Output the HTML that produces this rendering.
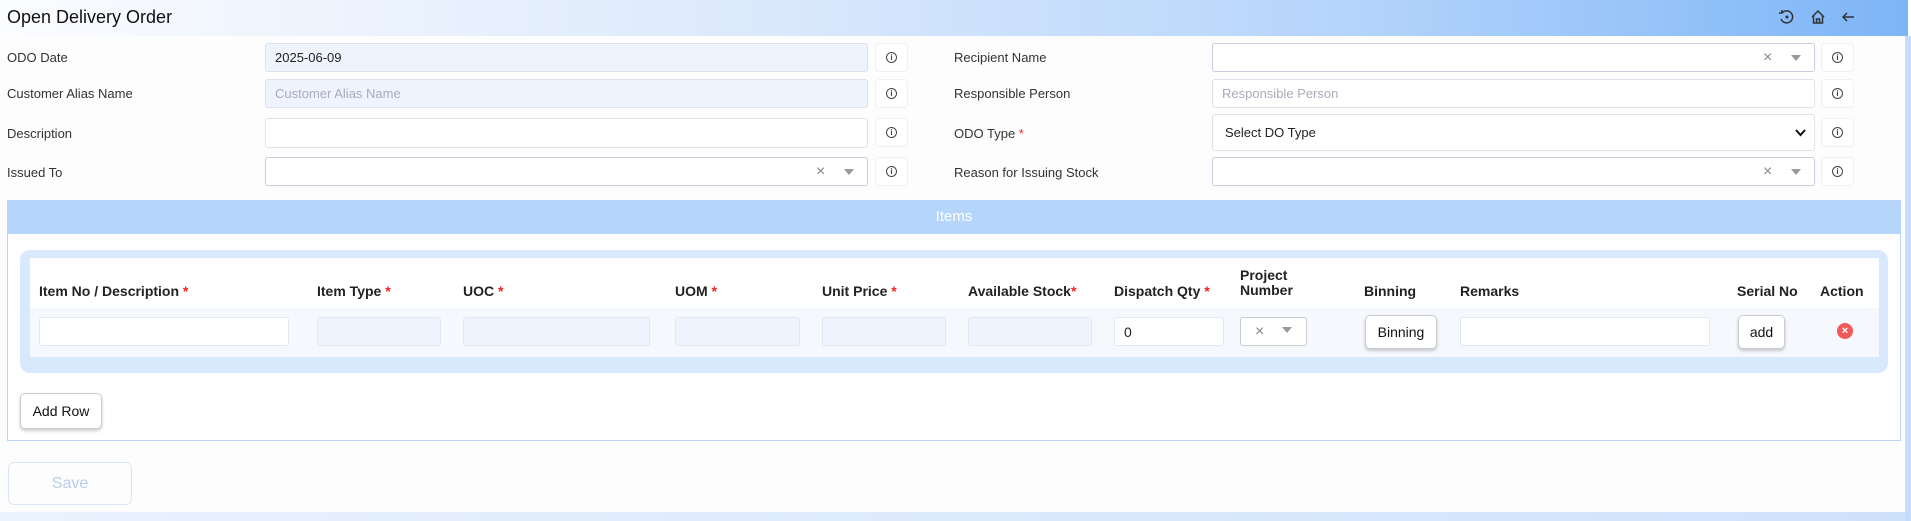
<!DOCTYPE html>
<html><head><meta charset="utf-8"><style>
*{box-sizing:border-box;margin:0;padding:0}
body{width:1911px;height:521px;overflow:hidden;background:#fdfdfe;font-family:"Liberation Sans",sans-serif;color:#222;position:relative}
.a{position:absolute}
.hdr{left:0;top:0;width:1908px;height:36px;background:linear-gradient(90deg,#fbfcff 0%,#dbe9fc 40%,#b6d5fb 70%,#7db5f7 100%)}
.title{left:7px;top:7px;font-size:18px;color:#111}
.lbl{font-size:13px;color:#333}
.inp{border:1px solid #dde3ec;border-radius:3px;background:#fff;font-size:13px;padding-left:9px;display:flex;align-items:center}
.ro{background:#eef4fd}
.ph{color:#aab}
.info{width:33px;height:29px;border:1px solid #eef0f4;border-radius:4px;background:#fff;display:flex;align-items:center;justify-content:center}
.info span{width:11px;height:11px;border:1.2px solid #444;border-radius:50%;font-size:8px;line-height:9px;text-align:center;font-weight:bold;color:#444}
.x{position:absolute;color:#888;font-size:16px}
.tri{position:absolute;width:0;height:0;border-left:5px solid transparent;border-right:5px solid transparent;border-top:6px solid #999}
.th{font-size:14px;font-weight:bold;color:#222;top:283px}
.req{color:#e22}
.ci{top:317px;height:29px;border:1px solid #e3e8ef;border-radius:3px;background:#eef4fd}
.btn{background:#fff;border:1px solid #ccc;border-radius:5px;box-shadow:0 2px 3px rgba(0,0,0,.2);font-size:14px;display:flex;align-items:center;justify-content:center;color:#111}
</style></head><body>
<div class="a hdr"></div>
<div class="a title">Open Delivery Order</div>
<svg class="a" style="left:1777px;top:7px" width="90" height="20" viewBox="0 0 90 20">
<g fill="none" stroke="#333" stroke-width="1.5">
<path d="M5 6 A6 6 0 1 1 4 12"/><path d="M2 6 L5 6 L5 3"/><circle cx="10" cy="10" r="0.8" fill="#333"/>
<path d="M35 10 L41 4 L47 10 M36.5 9 V16 H45.5 V9 M39.5 16 V12 H42.5 V16"/>
<path d="M77 10 H66 M70 6 L66 10 L70 14"/></g></svg>

<!-- left col -->
<div class="a lbl" style="left:7px;top:50px">ODO Date</div>
<div class="a lbl" style="left:7px;top:86px">Customer Alias Name</div>
<div class="a lbl" style="left:7px;top:126px">Description</div>
<div class="a lbl" style="left:7px;top:165px">Issued To</div>
<div class="a inp ro" style="left:265px;top:43px;width:603px;height:29px">2025-06-09</div>
<div class="a inp ro ph" style="left:265px;top:79px;width:603px;height:29px">Customer Alias Name</div>
<div class="a inp" style="left:265px;top:118px;width:603px;height:30px"></div>
<div class="a inp" style="left:265px;top:157px;width:603px;height:29px;border-color:#ccd"><span class="x" style="left:550px;top:5px">×</span><span class="tri" style="left:578px;top:11px"></span></div>
<div class="a info" style="left:875px;top:43px"><span>i</span></div>
<div class="a info" style="left:875px;top:79px"><span>i</span></div>
<div class="a info" style="left:875px;top:118px"><span>i</span></div>
<div class="a info" style="left:875px;top:157px"><span>i</span></div>
<!-- right col -->
<div class="a lbl" style="left:954px;top:50px">Recipient Name</div>
<div class="a lbl" style="left:954px;top:86px">Responsible Person</div>
<div class="a lbl" style="left:954px;top:126px">ODO Type <span class="req">*</span></div>
<div class="a lbl" style="left:954px;top:165px">Reason for Issuing Stock</div>
<div class="a inp" style="left:1212px;top:43px;width:603px;height:29px;border-color:#ccd"><span class="x" style="left:550px;top:5px">×</span><span class="tri" style="left:578px;top:11px"></span></div>
<div class="a inp ph" style="left:1212px;top:79px;width:603px;height:29px">Responsible Person</div>
<div class="a inp" style="left:1212px;top:114px;width:603px;height:37px;padding-left:12px">Select DO Type<svg style="position:absolute;right:8px;top:14px" width="11" height="8"><path d="M1 1 L5.5 6 L10 1" fill="none" stroke="#111" stroke-width="2"/></svg></div>
<div class="a inp" style="left:1212px;top:157px;width:603px;height:29px;border-color:#ccd"><span class="x" style="left:550px;top:5px">×</span><span class="tri" style="left:578px;top:11px"></span></div>
<div class="a info" style="left:1821px;top:43px"><span>i</span></div>
<div class="a info" style="left:1821px;top:79px"><span>i</span></div>
<div class="a info" style="left:1821px;top:118px"><span>i</span></div>
<div class="a info" style="left:1821px;top:157px"><span>i</span></div>

<!-- items -->
<div class="a" style="left:7px;top:200px;width:1894px;height:241px;border:1px solid #b9d4f6;background:#fff"></div>
<div class="a" style="left:7px;top:200px;width:1894px;height:34px;background:#b5d6fa;border-radius:4px 4px 0 0;color:#fff;font-size:15px;text-align:center;line-height:34px">Items</div>
<div class="a" style="left:20px;top:250px;width:1868px;height:123px;background:#d9e9fd;border-radius:10px"></div>
<div class="a" style="left:30px;top:258px;width:1849px;height:50px;background:#fff"></div>
<div class="a" style="left:30px;top:308px;width:1849px;height:49px;background:#f5f8fd"></div>
<div class="a th" style="left:39px">Item No / Description <span class="req">*</span></div>
<div class="a th" style="left:317px">Item Type <span class="req">*</span></div>
<div class="a th" style="left:463px">UOC <span class="req">*</span></div>
<div class="a th" style="left:675px">UOM <span class="req">*</span></div>
<div class="a th" style="left:822px">Unit Price <span class="req">*</span></div>
<div class="a th" style="left:968px">Available Stock<span class="req">*</span></div>
<div class="a th" style="left:1114px">Dispatch Qty <span class="req">*</span></div>
<div class="a th" style="left:1240px;top:268px;line-height:15px">Project<br>Number</div>
<div class="a th" style="left:1364px">Binning</div>
<div class="a th" style="left:1460px">Remarks</div>
<div class="a th" style="left:1737px">Serial No</div>
<div class="a th" style="left:1820px">Action</div>
<div class="a ci" style="left:39px;width:250px;background:#fff"></div>
<div class="a ci" style="left:317px;width:124px"></div>
<div class="a ci" style="left:463px;width:187px"></div>
<div class="a ci" style="left:675px;width:125px"></div>
<div class="a ci" style="left:822px;width:124px"></div>
<div class="a ci" style="left:968px;width:124px"></div>
<div class="a ci inp" style="left:1114px;width:110px;background:#fff;font-size:14px">0</div>
<div class="a ci" style="left:1240px;width:67px;background:#fff;border-color:#ccc"><span class="x" style="left:14px;top:5px">×</span><span class="tri" style="left:41px;top:9px"></span></div>
<div class="a btn" style="left:1365px;top:315px;width:72px;height:34px">Binning</div>
<div class="a ci" style="left:1460px;width:250px;background:#fff"></div>
<div class="a btn" style="left:1738px;top:315px;width:47px;height:34px">add</div>
<div class="a" style="left:1837px;top:323px;width:16px;height:16px;border-radius:50%;background:#ef5a5a;color:#fff;font-size:11px;text-align:center;line-height:16px;font-weight:bold">×</div>
<div class="a btn" style="left:20px;top:393px;width:82px;height:36px">Add Row</div>
<div class="a" style="left:8px;top:462px;width:124px;height:43px;border:1px solid #dbe6f5;border-radius:6px;color:#b8cdee;font-size:16px;text-align:center;line-height:41px">Save</div>
<div class="a" style="left:0;top:512px;width:1911px;height:9px;background:linear-gradient(90deg,#eaf2fd,#cfe2fb)"></div>
<div class="a" style="left:1905px;top:36px;width:6px;height:485px;background:#c5ddfa"></div>
</body></html>
